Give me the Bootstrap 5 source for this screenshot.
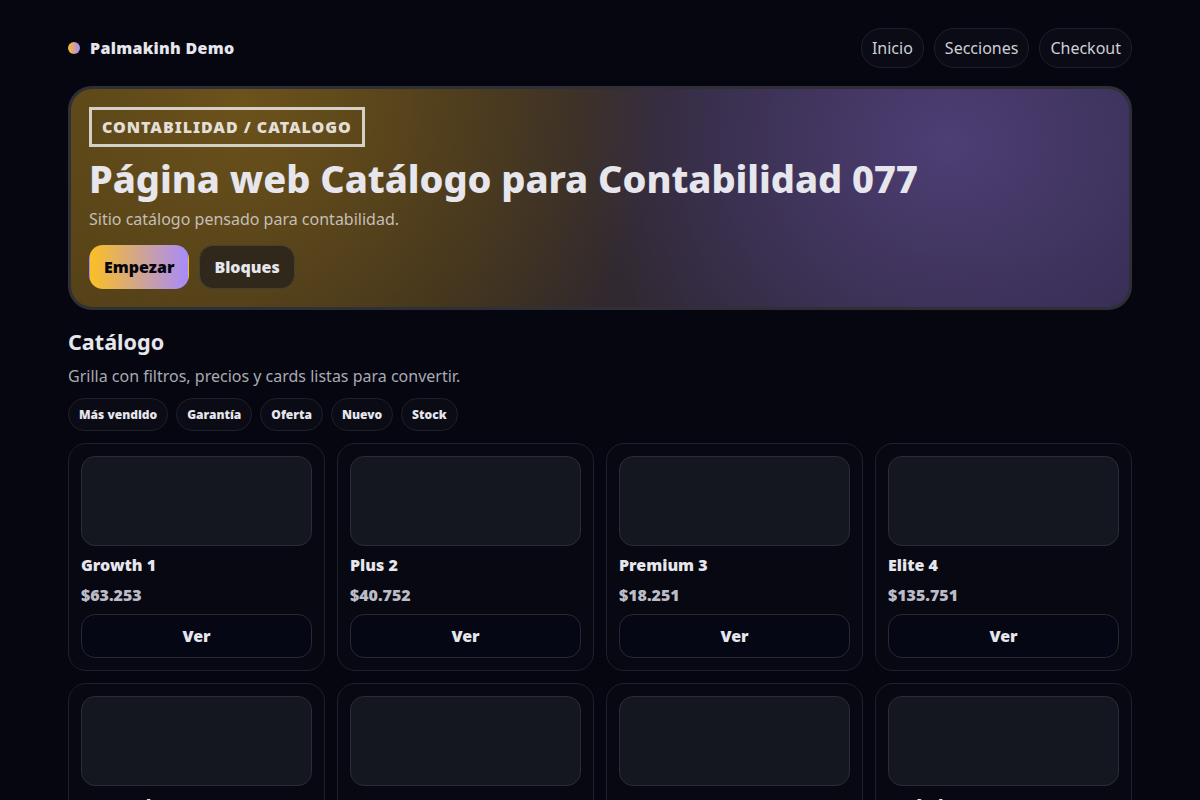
<!DOCTYPE html>
<html lang="es">
<head>
  <meta charset="UTF-8">
  <meta name="viewport" content="width=device-width, initial-scale=1">
  <title>Palmakinh Demo</title>
  <link href="https://cdn.jsdelivr.net/npm/bootstrap@5.3.0/dist/css/bootstrap.min.css" rel="stylesheet">
  <style>
    body {
      background: #050610;
      color: #e6e6ec;
      font-family: "Noto Sans", sans-serif;
      height: 800px;
      overflow: hidden;
    }
    .page-wrap { padding: 28px 68px 0; }
    .brand-wrap { gap: 10px; }
    .brand-dot {
      width: 12px;
      height: 12px;
      border-radius: 50%;
      background: linear-gradient(90deg, #fbbf24, #a78bfa);
    }
    .brand-name { font-size: 16px; font-weight: 900; letter-spacing: .3px; }
    .top-link {
      height: 40px;
      padding: 0 10px;
      border: 1px solid #1f202b;
      border-radius: 20px;
      background: #0a0b14;
      color: #cfcfd6;
      font-size: 16px;
      line-height: 38px;
      text-decoration: none;
    }
    .hero-box {
      height: 224px;
      margin-top: 18px;
      padding: 18px;
      border: 3px solid #2f2f38;
      border-radius: 24px;
      background:
        radial-gradient(ellipse 420px 380px at 16% 5%, #6c521b 0, rgba(108,82,27,0) 100%),
        radial-gradient(ellipse 370px 310px at 83% 25%, #4d3e74 0, rgba(77,62,116,0) 100%),
        linear-gradient(90deg, #4a3a16 0, #352b1e 35%, #2f2838 60%, #30284a 100%);
    }
    .hero-tag {
      display: inline-block;
      height: 40px;
      padding: 0 10px;
      border: 3px solid #d5d0c5;
      color: #e3dfd6;
      font-size: 16px;
      font-weight: 900;
      letter-spacing: .96px;
      line-height: 34px;
    }
    .hero-title { margin: 6px 0 0; font-size: 38px; font-weight: 800; line-height: 50px; letter-spacing: -.05px; }
    .hero-text { margin: 3px 0 0; font-size: 16px; line-height: 26px; color: #c4bfb6; }
    .btn-main, .btn-alt {
      height: 44px;
      padding: 0 14px;
      border-radius: 14px;
      font-size: 16px;
      font-weight: 900;
      line-height: 42px;
    }
    .btn-main {
      border: 1px solid transparent;
      background: linear-gradient(90deg, #fbbf24, #a78bfa);
      color: #05060f;
    }
    .btn-alt {
      border: 1px solid #45402f;
      background: #2f281b;
    }
    .hero-actions { gap: 10px; margin-top: 13px; }
    .top-nav { gap: 10px; }
    .section-title { margin: 18px 0 0; font-size: 21.6px; font-weight: 700; line-height: 28px; }
    .section-text { margin: 8px 0 0; font-size: 16px; line-height: 24px; color: #a9aab2; }
    .tag-row { margin-top: 10px; }
    .tag-pill {
      height: 33px;
      padding: 0 10px;
      border: 1px solid #1f202b;
      border-radius: 17px;
      background: #0a0b14;
      font-size: 12px;
      font-weight: 900;
      line-height: 31px;
    }
    .product-grid {
      display: grid;
      grid-template-columns: repeat(4, 1fr);
      gap: 12px;
      margin-top: 12px;
    }
    .product-box {
      height: 228px;
      padding: 12px;
      border: 1px solid #1f202b;
      border-radius: 18px;
      background: #070812;
    }
    .product-img {
      height: 90px;
      border: 1px solid #2a2d37;
      border-radius: 14px;
      background: #141720;
    }
    .product-name { margin-top: 8px; font-size: 16px; font-weight: 900; line-height: 22px; }
    .product-price { margin-top: 8px; font-size: 16px; font-weight: 900; line-height: 22px; color: #bcbcc6; }
    .product-btn {
      display: block;
      width: 100%;
      height: 44px;
      margin-top: 8px;
      border: 1px solid #262832;
      border-radius: 14px;
      background: #060714;
      color: #e6e6ec;
      font-size: 16px;
      font-weight: 900;
    }
  </style>
</head>
<body>
  <div class="page-wrap">
    <header class="d-flex justify-content-between align-items-center">
      <div class="brand-wrap d-flex align-items-center">
        <span class="brand-dot"></span>
        <span class="brand-name">Palmakinh Demo</span>
      </div>
      <nav class="top-nav d-flex">
        <a class="top-link" href="#">Inicio</a>
        <a class="top-link" href="#">Secciones</a>
        <a class="top-link" href="#">Checkout</a>
      </nav>
    </header>

    <section class="hero-box">
      <span class="hero-tag">CONTABILIDAD / CATALOGO</span>
      <h1 class="hero-title">Página web Catálogo para Contabilidad 077</h1>
      <p class="hero-text">Sitio catálogo pensado para contabilidad.</p>
      <div class="hero-actions d-flex">
        <div class="btn-main">Empezar</div>
        <div class="btn-alt">Bloques</div>
      </div>
    </section>

    <h2 class="section-title">Catálogo</h2>
    <p class="section-text">Grilla con filtros, precios y cards listas para convertir.</p>
    <div class="tag-row d-flex gap-2">
      <span class="tag-pill">Más vendido</span>
      <span class="tag-pill">Garantía</span>
      <span class="tag-pill">Oferta</span>
      <span class="tag-pill">Nuevo</span>
      <span class="tag-pill">Stock</span>
    </div>

    <div class="product-grid" id="grid"></div>
  </div>

  <script>
    // tarjetas del catalogo
    const products = [
      ["Growth 1", "$63.253"], ["Plus 2", "$40.752"], ["Premium 3", "$18.251"], ["Elite 4", "$135.751"],
      ["Mensual 5", "$63.253"], ["Pro 6", "$40.752"], ["Max 7", "$18.251"], ["Estándar 8", "$135.751"]
    ];
    document.getElementById("grid").innerHTML = products.map(p => `
      <article class="product-box">
        <div class="product-img"></div>
        <div class="product-name">${p[0]}</div>
        <div class="product-price">${p[1]}</div>
        <button class="product-btn">Ver</button>
      </article>`).join("");
  </script>
  <script src="https://cdn.jsdelivr.net/npm/bootstrap@5.3.0/dist/js/bootstrap.bundle.min.js"></script>
</body>
</html>
